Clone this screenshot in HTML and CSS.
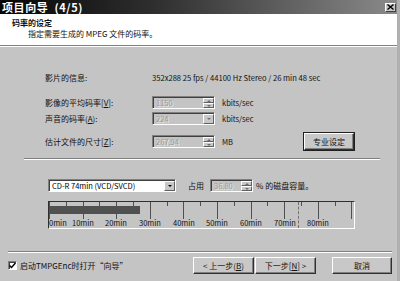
FILE: index.html
```html
<!DOCTYPE html>
<html lang="zh-CN">
<head>
    <meta charset="UTF-8">
    <title>项目向导 (4/5)</title>
    <link rel="stylesheet" href="styles.css">
</head>
<body>
    <div class="window">
        <!-- Title bar -->
        <div class="titlebar">
            <span class="title">项目向导 (4/5)</span>
            <span class="close">
                <svg width="7" height="6" viewBox="0 0 7 6"><path d="M0.5 0.5 L6.5 5.5 M6.5 0.5 L0.5 5.5" stroke="#000" stroke-width="1.4"/></svg>
            </span>
        </div>

        <!-- Header -->
        <div class="header">
            <div class="head-title">码率的设定</div>
            <div class="head-sub">指定需要生成的 MPEG 文件的码率。</div>
        </div>

        <div class="body">
            <div class="row info">
                <span class="label">影片的信息:</span>
                <span class="info-value">352x288 25 fps / 44100 Hz Stereo / 26 min 48 sec</span>
            </div>

            <div class="row r1">
                <span class="label">影像的平均码率[<u>V</u>]:</span>
                <span class="field disabled">1150<span class="spin"><i class="up"></i><i class="down"></i></span></span>
                <span class="unit">kbits/sec</span>
            </div>

            <div class="row r2">
                <span class="label">声音的码率(<u>A</u>):</span>
                <span class="field disabled">224<span class="drop"><i class="down"></i></span></span>
                <span class="unit">kbits/sec</span>
            </div>

            <div class="row r3">
                <span class="label">估计文件的尺寸[<u>Z</u>]:</span>
                <span class="field disabled">267.94<span class="spin"><i class="up"></i><i class="down"></i></span></span>
                <span class="unit">MB</span>
                <button class="btn pro">专业设定</button>
            </div>

            <div class="sep"></div>

            <div class="disk-row">
                <span class="field select">CD-R 74min (VCD/SVCD)<span class="drop"><i class="down"></i></span></span>
                <span class="occupy">占用</span>
                <span class="field disabled small">36.80<span class="spin"><i class="up"></i><i class="down"></i></span></span>
                <span class="unit-pct">% 的磁盘容量。</span>
            </div>

            <!-- Disc usage ruler -->
            <div class="ruler">
                <div class="minor"></div>
                <div class="major"></div>
                <div class="usage" style="width: 91px"></div>
                <div class="limit" style="left: 249px"></div>
                <span class="mark first">0min</span>
                <span class="mark" style="left: 34px">10min</span>
                <span class="mark" style="left: 67px">20min</span>
                <span class="mark" style="left: 101px">30min</span>
                <span class="mark" style="left: 135px">40min</span>
                <span class="mark" style="left: 168px">50min</span>
                <span class="mark" style="left: 202px">60min</span>
                <span class="mark" style="left: 236px">70min</span>
                <span class="mark" style="left: 269px">80min</span>
            </div>

            <div class="sep wide"></div>

            <div class="footer">
                <span class="check">
                    <svg width="7" height="7" viewBox="0 0 7 7"><path d="M0.5 3.5 L2.5 5.5 L6.5 1" fill="none" stroke="#000" stroke-width="1.5"/></svg>
                </span>
                <span class="check-text">启动TMPGEnc时打开“向导”</span>
                <div class="buttons">
                    <button class="btn nav">&lt; 上一步(<u>B</u>)</button>
                    <button class="btn nav">下一步[<u>N</u>] &gt;</button>
                    <button class="btn cancel">取消</button>
                </div>
            </div>
        </div>
    </div>
</body>
</html>
```

FILE: styles.css
```css
* {
    margin: 0;
    padding: 0;
    box-sizing: border-box;
    font-family: "Noto Sans CJK SC", sans-serif;
}

body {
    background: #c4c4c4;
    overflow: hidden;
}

.window {
    width: 400px;
    height: 281px;
    background: #c4c4c4;
    border-right: 3px solid #b0b0b0;
    font-size: 8px;
    color: #111;
}

.titlebar {
    height: 14px;
    display: flex;
    align-items: center;
    background: linear-gradient(to right, #050505, #303030 40%, #8a8a8a);
    padding-left: 2px;
}

.title {
    color: #fff;
    font-weight: bold;
    font-size: 11px;
    line-height: 14px;
    letter-spacing: 0.6px;
    word-spacing: 3px;
}

.close {
    margin-left: auto;
    margin-right: 1px;
    width: 11px;
    height: 9px;
    background: #c8c8c8;
    border: 1px solid;
    border-color: #fff #404040 #404040 #fff;
    display: flex;
    align-items: center;
    justify-content: center;
}

.header {
    height: 32px;
    background: #fff;
    border-bottom: 1px solid #808080;
    padding-top: 3px;
}

.head-title {
    font-weight: bold;
    line-height: 11px;
    padding-left: 12px;
}

.head-sub {
    line-height: 11px;
    padding-left: 28px;
}

.body {
    border-top: 1px solid #fff;
}

.row {
    display: flex;
    align-items: center;
    margin-left: 45px;
    width: 309px;
}

.label {
    width: 107px;
    flex: none;
}

.info {
    margin-top: 24px;
    height: 12px;
}

.info-value {
    font-size: 7.6px;
    white-space: nowrap;
}

.r1 {
    margin-top: 13px;
    height: 13px;
}

.r2 {
    margin-top: 3px;
    height: 13px;
}

.r3 {
    margin-top: 8px;
    height: 17px;
}

.field {
    position: relative;
    display: block;
    flex: none;
    width: 63px;
    height: 13px;
    line-height: 11px;
    padding-left: 3px;
    border: 1px solid;
    border-color: #808080 #fff #fff #808080;
    box-shadow: inset 1px 1px #404040;
    font-size: 7.5px;
}

.field.disabled {
    color: #9a9a9a;
    text-shadow: 1px 1px #e8e8e8;
}

.field.select {
    width: 128px;
    background: #fff;
    color: #000;
}

.field.small {
    width: 43px;
}

.spin,
.drop {
    position: absolute;
    right: 0;
    top: 1px;
    width: 11px;
    height: 10px;
    display: flex;
    flex-direction: column;
}

.spin i,
.drop i {
    flex: 1;
    display: flex;
    align-items: center;
    justify-content: center;
    background: #c8c8c8;
    border: 1px solid;
    border-color: #fff #606060 #606060 #fff;
}

.spin i::after,
.drop i::after {
    content: "";
    border-left: 2px solid transparent;
    border-right: 2px solid transparent;
}

.up::after {
    border-bottom: 2px solid #707070;
}

.down::after {
    border-top: 2px solid #707070;
}

.select .drop i::after {
    border-top-color: #000;
}

.unit {
    margin-left: 7px;
    font-size: 7.5px;
}

.btn {
    height: 17px;
    background: #c8c8c8;
    border: 1px solid;
    border-color: #fff #303030 #303030 #fff;
    box-shadow: inset -1px -1px #808080;
    font-size: 8px;
    color: #111;
}

.pro {
    margin-left: auto;
    width: 50px;
    outline: 1px solid #202020;
}

.sep {
    margin-top: 8px;
    margin-left: 24px;
    width: 356px;
    height: 2px;
    border-top: 1px solid #808080;
    border-bottom: 1px solid #fff;
}

.disk-row {
    display: flex;
    align-items: center;
    margin-top: 19px;
    margin-left: 48px;
    height: 13px;
}

.occupy {
    margin-left: 12px;
}

.disk-row .field.small {
    margin-left: 6px;
}

.unit-pct {
    margin-left: 3px;
}

.ruler {
    position: relative;
    margin-top: 9px;
    margin-left: 48px;
    width: 307px;
    height: 28px;
    border: 1px solid;
    border-color: #303030 #fff #fff #303030;
}

.minor {
    position: absolute;
    left: 0;
    top: 0;
    width: 303px;
    height: 4px;
    background: repeating-linear-gradient(to right, #505050 0 1px, transparent 1px 16.8px);
}

.major {
    position: absolute;
    left: 0;
    top: 0;
    width: 303px;
    height: 17px;
    background: repeating-linear-gradient(to right, #505050 0 1px, transparent 1px 33.6px);
}

.usage {
    position: absolute;
    left: 0;
    top: 4px;
    height: 8px;
    background: #505050;
}

.limit {
    position: absolute;
    top: 0;
    bottom: 0;
    border-left: 1px dashed #707070;
}

.mark {
    position: absolute;
    top: 16px;
    font-size: 7.5px;
    line-height: 9px;
    transform: translateX(-50%);
}

.mark.first {
    left: 0;
    transform: none;
}

.sep.wide {
    margin-top: 22px;
    margin-left: 8px;
    width: 384px;
}

.footer {
    display: flex;
    align-items: center;
    margin-top: 4px;
    height: 17px;
    padding-left: 8px;
    padding-right: 5px;
}

.check {
    width: 9px;
    height: 9px;
    background: #fff;
    border: 1px solid;
    border-color: #808080 #fff #fff #808080;
    box-shadow: inset 1px 1px #404040;
    display: flex;
    align-items: center;
    justify-content: center;
}

.check-text {
    margin-left: 3px;
}

.buttons {
    margin-left: auto;
    display: flex;
}

.nav {
    width: 61px;
    margin-left: 1px;
}

.cancel {
    width: 60px;
    margin-left: 16px;
}
```
